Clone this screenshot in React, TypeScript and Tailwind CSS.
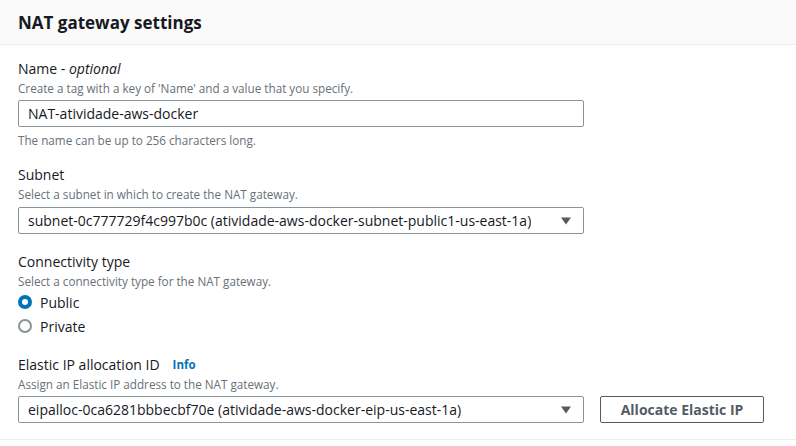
import React from 'react';

const font = { fontFamily: '"Open Sans", "Noto Sans", Arial, sans-serif' };

const Label: React.FC<{ children: React.ReactNode }> = ({ children }) => (
  <div className="text-[14px] leading-[20px] text-[#16191f]">{children}</div>
);

const Desc: React.FC<{ children: React.ReactNode }> = ({ children }) => (
  <div className="text-[11.7px] leading-[18px] text-[#687078]">{children}</div>
);

const Caret: React.FC = () => (
  <svg width="12" height="10" viewBox="0 0 12 10" className="shrink-0">
    <path d="M1 1.5h10L6 8.5z" fill="#545b64" />
  </svg>
);

const Select: React.FC<{ value: string; width: string }> = ({ value, width }) => (
  <div
    className={`${width} h-[27px] border border-[#879596] rounded-[2px] flex items-center justify-between pl-[9px] pr-[11px] text-[14px] text-[#16191f] bg-white`}
  >
    <span className="truncate">{value}</span>
    <Caret />
  </div>
);

const Radio: React.FC<{ checked?: boolean; label: string }> = ({ checked, label }) => (
  <div className="flex items-center h-[24px] gap-[8px]">
    {checked ? (
      <div className="w-[14px] h-[14px] rounded-full bg-[#0073bb] flex items-center justify-center">
        <div className="w-[6px] h-[6px] rounded-full bg-white" />
      </div>
    ) : (
      <div className="w-[14px] h-[14px] rounded-full border-2 border-[#879596] bg-white" />
    )}
    <span className="text-[14px] text-[#16191f]">{label}</span>
  </div>
);

export default function App() {
  return (
    <div className="w-[796px] h-[446px] bg-white overflow-hidden" style={font}>
      <div className="h-[45px] bg-[#fafafa] border-b border-[#eaeded] flex items-center px-[18px]">
        <h2 className="text-[17px] font-bold text-[#16191f] leading-none">NAT gateway settings</h2>
      </div>

      <div className="px-[18px] pt-[14px] flex flex-col">
        <div className="flex flex-col">
          <Label>
            Name - <i>optional</i>
          </Label>
          <Desc>Create a tag with a key of 'Name' and a value that you specify.</Desc>
          <div className="mt-[3px] w-[566px] h-[27px] border border-[#879596] rounded-[2px] flex items-center px-[9px] text-[14px] text-[#16191f]">
            NAT-atividade-aws-docker
          </div>
          <div className="mt-[4px]">
            <Desc>The name can be up to 256 characters long.</Desc>
          </div>
        </div>

        <div className="flex flex-col mt-[16px]">
          <Label>Subnet</Label>
          <Desc>Select a subnet in which to create the NAT gateway.</Desc>
          <div className="mt-[4px]">
            <Select
              width="w-[566px]"
              value="subnet-0c777729f4c997b0c (atividade-aws-docker-subnet-public1-us-east-1a)"
            />
          </div>
        </div>

        <div className="flex flex-col mt-[18px]">
          <Label>Connectivity type</Label>
          <Desc>Select a connectivity type for the NAT gateway.</Desc>
          <div className="flex flex-col">
            <Radio checked label="Public" />
            <Radio label="Private" />
          </div>
        </div>

        <div className="flex flex-col mt-[17px]">
          <div className="flex items-center gap-[13px]">
            <Label>Elastic IP allocation ID</Label>
            <span className="text-[11.5px] font-bold text-[#0073bb]">Info</span>
          </div>
          <Desc>Assign an Elastic IP address to the NAT gateway.</Desc>
          <div className="mt-[3px] flex items-center gap-[16px]">
            <Select
              width="w-[566px]"
              value="eipalloc-0ca6281bbbecbf70e (atividade-aws-docker-eip-us-east-1a)"
            />
            <button className="w-[164px] h-[27px] border border-[#545b64] rounded-[2px] bg-white text-[14px] font-bold text-[#545b64]">
              Allocate Elastic IP
            </button>
          </div>
        </div>
      </div>
      <div className="mt-[16px] border-t border-[#eaeded]" />
    </div>
  );
}
